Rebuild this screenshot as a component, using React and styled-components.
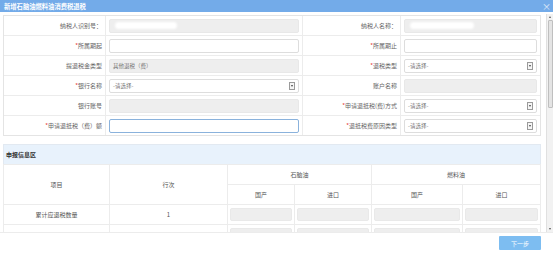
import React from 'react';
import styled, { createGlobalStyle } from 'styled-components';

const GlobalStyle = createGlobalStyle`
  *, *::before, *::after { box-sizing: border-box; }
  html, body { margin: 0; padding: 0; background: #fff; }
  body { font-family: "Noto Sans CJK SC", "Noto Sans", sans-serif; }
`;

const Dialog = styled.div`
  width: 553px;
  height: 254px;
  display: flex;
  flex-direction: column;
  background: #fff;
  overflow: hidden;
`;

const TitleBar = styled.div`
  height: 12px;
  flex: none;
  background: #73abe9;
  color: #fff;
  display: flex;
  align-items: center;
  justify-content: space-between;
  padding: 0 2px 0 4px;
  font-size: 6.3px;
  font-weight: bold;
`;

const Close = styled.span`
  font-size: 9px;
  font-weight: normal;
  line-height: 1;
  color: #e4eefa;
`;

const Main = styled.div`
  flex: 1;
  min-height: 0;
  margin-top: 2px;
  display: flex;
`;

const Content = styled.div`
  flex: 1;
  min-width: 0;
  overflow: hidden;
  padding: 1px 5px 0 3px;
`;

const ScrollBar = styled.div`
  width: 7px;
  flex: none;
  display: flex;
  flex-direction: column;
  background: #f2f2f2;
  border-left: 1px solid #e0e0e0;
`;

const ScrollButton = styled.div`
  height: 6px;
  flex: none;
  display: flex;
  align-items: center;
  justify-content: center;

  &::after {
    content: '';
    border-left: 1.5px solid transparent;
    border-right: 1.5px solid transparent;
    ${p => (p.$down ? 'border-top: 2px solid #555;' : 'border-bottom: 2px solid #555;')}
  }
`;

const Thumb = styled.div`
  height: 88px;
  margin: 0 0.5px;
  background: #e4e4e4;
  border: 1px solid #bfbfbf;
  border-radius: 1px;
`;

const Track = styled.div`
  flex: 1;
`;

const FormGrid = styled.div`
  display: grid;
  grid-template-columns: 102px 197px 98px 1fr;
  border: 1px solid #e4e4e4;

  & > div { height: 20px; border-bottom: 1px solid #ececec; }
  & > div:nth-child(4n + 1),
  & > div:nth-child(4n + 2),
  & > div:nth-child(4n + 3) { border-right: 1px solid #ececec; }
  & > div:nth-last-child(-n + 4) { border-bottom: none; height: 19px; }
`;

const Label = styled.div`
  display: flex;
  align-items: center;
  justify-content: flex-end;
  padding-right: 3px;
  color: #666;
  font-size: 6px;
  white-space: nowrap;
`;

const Star = styled.span`
  color: #e53935;
`;

const Cell = styled.div`
  display: flex;
  align-items: center;
  padding: 0 3px;
`;

const Field = styled.div`
  flex: 1;
  height: 14px;
  display: flex;
  align-items: center;
  padding: 0 3px;
  border-radius: 2px;
  font-size: 5.5px;
  color: #777;
  background: ${p => (p.$disabled ? '#eeeeee' : '#fff')};
  border: 1px solid ${p => (p.$focus ? '#8ab2dc' : p.$disabled ? '#e8e8e8' : '#dddddd')};
`;

const Arrow = styled.span`
  margin-left: auto;
  width: 6px;
  height: 8px;
  border: 1px solid #9a9a9a;
  background: #f5f5f5;
  display: flex;
  align-items: center;
  justify-content: center;

  &::after {
    content: '';
    border-left: 1.5px solid transparent;
    border-right: 1.5px solid transparent;
    border-top: 2px solid #444;
  }
`;

const Redact = styled.span`
  width: ${p => p.$w}px;
  height: 7px;
  margin-left: 2px;
  background: #fff;
  border-radius: 4px;
  filter: blur(1px);
`;

const Section = styled.div`
  margin-top: 8px;
`;

const SectionHead = styled.div`
  height: 20px;
  display: flex;
  align-items: center;
  padding-left: 2px;
  background: #e8f2fc;
  border: 1px solid #e2e9f1;
  border-bottom: none;
  color: #333;
  font-size: 6px;
  font-weight: bold;
`;

const Table = styled.table`
  width: 100%;
  border-collapse: collapse;
  table-layout: fixed;
  font-size: 6px;
  color: #555;
`;

const Th = styled.th`
  height: 20px;
  padding: 0;
  font-weight: normal;
  text-align: center;
  border: 1px solid #ececec;
`;

const Td = styled.td`
  height: 20px;
  padding: 0 2px;
  text-align: center;
  border: 1px solid #ececec;
`;

const NumBox = styled.div`
  height: 13px;
  background: #eeeeee;
  border: 1px solid #e9e9e9;
  border-radius: 2px;
`;

const Footer = styled.div`
  height: 22px;
  flex: none;
  display: flex;
  justify-content: flex-end;
  align-items: flex-start;
  padding: 3px 12px 0 0;
  border-top: 1px solid #ececec;
`;

const Button = styled.button`
  width: 42px;
  height: 14px;
  padding: 0;
  border: none;
  border-radius: 1px;
  background: #7dbdf1;
  color: #fff;
  font-family: inherit;
  font-size: 6px;
`;

const Req = ({ children }) => (
  <Label>
    <Star>*</Star>
    {children}
  </Label>
);

const Select = ({ text = '-请选择-' }) => (
  <Cell>
    <Field>
      {text}
      <Arrow />
    </Field>
  </Cell>
);

const rows = [
  { name: '累计应退税数量', no: 1 },
  { name: '', no: '' },
];

export default function App() {
  return (
    <>
      <GlobalStyle />
      <Dialog>
        <TitleBar>
          新增石脑油燃料油消费税退税
          <Close>×</Close>
        </TitleBar>
        <Main>
          <Content>
            <FormGrid>
              <Label>纳税人识别号：</Label>
              <Cell><Field $disabled><Redact $w={62} /></Field></Cell>
              <Label>纳税人名称：</Label>
              <Cell><Field $disabled><Redact $w={64} /></Field></Cell>

              <Req>所属期起</Req>
              <Cell><Field /></Cell>
              <Req>所属期止</Req>
              <Cell><Field /></Cell>

              <Label>提退税金类型</Label>
              <Cell><Field $disabled>其他退税（费）</Field></Cell>
              <Req>退税类型</Req>
              <Select />

              <Req>银行名称</Req>
              <Select />
              <Label>账户名称</Label>
              <Cell><Field $disabled /></Cell>

              <Label>银行账号</Label>
              <Cell><Field $disabled /></Cell>
              <Req>申请退抵税(费)方式</Req>
              <Select />

              <Req>申请退抵税（费）额</Req>
              <Cell><Field $focus /></Cell>
              <Req>退抵税费原因类型</Req>
              <Select />
            </FormGrid>

            <Section>
              <SectionHead>申报信息区</SectionHead>
              <Table>
                <colgroup>
                  <col style={{ width: 106 }} />
                  <col style={{ width: 118 }} />
                  <col style={{ width: 67 }} />
                  <col style={{ width: 77 }} />
                  <col style={{ width: 91 }} />
                  <col />
                </colgroup>
                <thead>
                  <tr>
                    <Th rowSpan={2}>项目</Th>
                    <Th rowSpan={2}>行次</Th>
                    <Th colSpan={2}>石脑油</Th>
                    <Th colSpan={2}>燃料油</Th>
                  </tr>
                  <tr>
                    <Th>国产</Th>
                    <Th>进口</Th>
                    <Th>国产</Th>
                    <Th>进口</Th>
                  </tr>
                </thead>
                <tbody>
                  {rows.map((r, i) => (
                    <tr key={i}>
                      <Td>{r.name}</Td>
                      <Td>{r.no}</Td>
                      <Td><NumBox /></Td>
                      <Td><NumBox /></Td>
                      <Td><NumBox /></Td>
                      <Td><NumBox /></Td>
                    </tr>
                  ))}
                </tbody>
              </Table>
            </Section>
          </Content>
          <ScrollBar>
            <ScrollButton />
            <Thumb />
            <Track />
            <ScrollButton $down />
          </ScrollBar>
        </Main>
        <Footer>
          <Button>下一步</Button>
        </Footer>
      </Dialog>
    </>
  );
}
